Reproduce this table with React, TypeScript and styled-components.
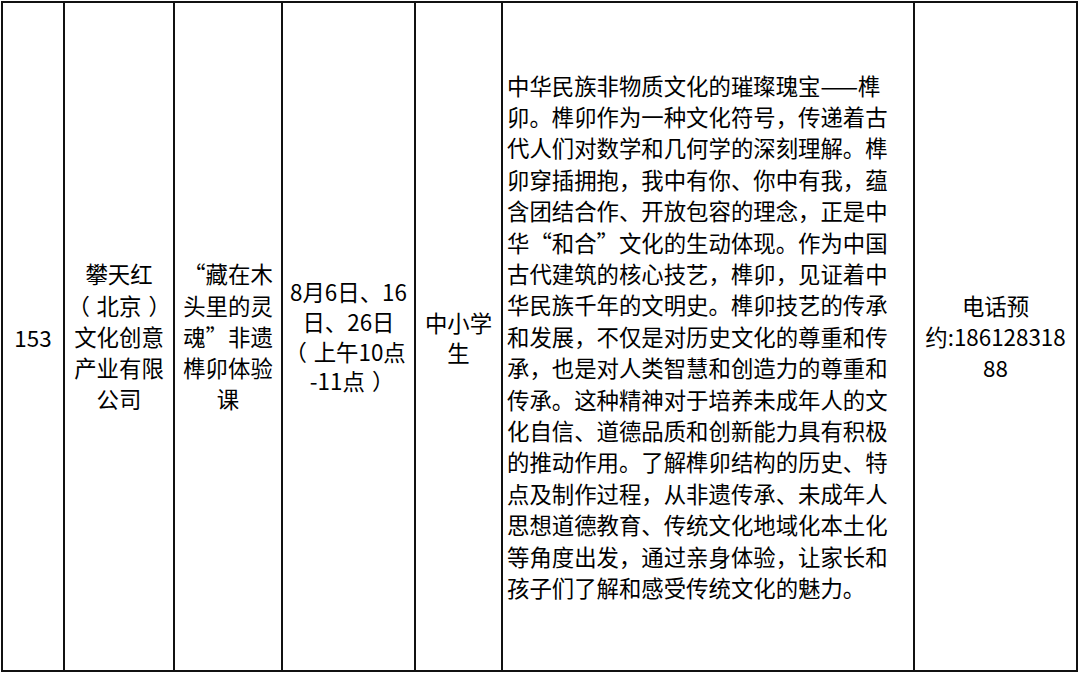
import React from 'react';
import styled, { createGlobalStyle } from 'styled-components';

const GlobalStyle = createGlobalStyle`
  html, body {
    margin: 0;
    padding: 0;
    background: #fff;
  }
  body {
    font-family: "Noto Sans CJK SC", "Noto Sans", sans-serif;
    color: #000;
  }
`;

const Table = styled.div`
  display: grid;
  grid-template-columns: 60px 108px 106px 131px 85px 410px 161px;
  grid-template-rows: 667px;
  gap: 2px;
  padding: 2px;
  margin: 1px 0 0 1px;
  width: max-content;
  background: #111;
`;

const Cell = styled.div<{ $align?: 'center' | 'left'; $lh?: number }>`
  background: #fff;
  display: flex;
  flex-direction: column;
  justify-content: center;
  align-items: ${({ $align }) => ($align === 'left' ? 'flex-start' : 'center')};
  text-align: ${({ $align }) => ($align === 'left' ? 'left' : 'center')};
  padding: ${({ $align }) => ($align === 'left' ? '0 0 0 4px' : '0')};
  font-size: 22.4px;
  line-height: ${({ $lh }) => $lh ?? 30}px;
`;

const Line = styled.span`
  display: block;
  white-space: nowrap;
`;

// full-width brackets sit centred in their em box in the original font
const Paren = styled.span<{ $open: boolean }>`
  display: inline-block;
  transform: translateX(${({ $open }) => ($open ? '-0.3em' : '0.32em')});
`;

const renderLine = (text: string) =>
  text.split(/([（）])/).map((part, k) =>
    part === '（' || part === '）' ? (
      <Paren key={k} $open={part === '（'}>
        {part}
      </Paren>
    ) : (
      part
    )
  );

const rows: { lines: string[]; lh: number; align?: 'left' }[] = [
  { lines: ['153'], lh: 30 },
  { lines: ['攀天红', '（北京）', '文化创意', '产业有限', '公司'], lh: 31.3 },
  { lines: ['“藏在木', '头里的灵', '魂”非遗', '榫卯体验', '课'], lh: 31.3 },
  { lines: ['8月6日、16', '日、26日', '（上午10点', '-11点）'], lh: 29.8 },
  { lines: ['中小学', '生'], lh: 30 },
  {
    align: 'left',
    lh: 31.4,
    lines: [
      '中华民族非物质文化的璀璨瑰宝——榫',
      '卯。榫卯作为一种文化符号，传递着古',
      '代人们对数学和几何学的深刻理解。榫',
      '卯穿插拥抱，我中有你、你中有我，蕴',
      '含团结合作、开放包容的理念，正是中',
      '华“和合”文化的生动体现。作为中国',
      '古代建筑的核心技艺，榫卯，见证着中',
      '华民族千年的文明史。榫卯技艺的传承',
      '和发展，不仅是对历史文化的尊重和传',
      '承，也是对人类智慧和创造力的尊重和',
      '传承。这种精神对于培养未成年人的文',
      '化自信、道德品质和创新能力具有积极',
      '的推动作用。了解榫卯结构的历史、特',
      '点及制作过程，从非遗传承、未成年人',
      '思想道德教育、传统文化地域化本土化',
      '等角度出发，通过亲身体验，让家长和',
      '孩子们了解和感受传统文化的魅力。',
    ],
  },
  { lines: ['电话预', '约:186128318', '88'], lh: 31 },
];

export default function App() {
  return (
    <>
      <GlobalStyle />
      <Table>
        {rows.map((cell, i) => (
          <Cell key={i} $align={cell.align} $lh={cell.lh}>
            {cell.lines.map((text, j) => (
              <Line key={j}>{renderLine(text)}</Line>
            ))}
          </Cell>
        ))}
      </Table>
    </>
  );
}
